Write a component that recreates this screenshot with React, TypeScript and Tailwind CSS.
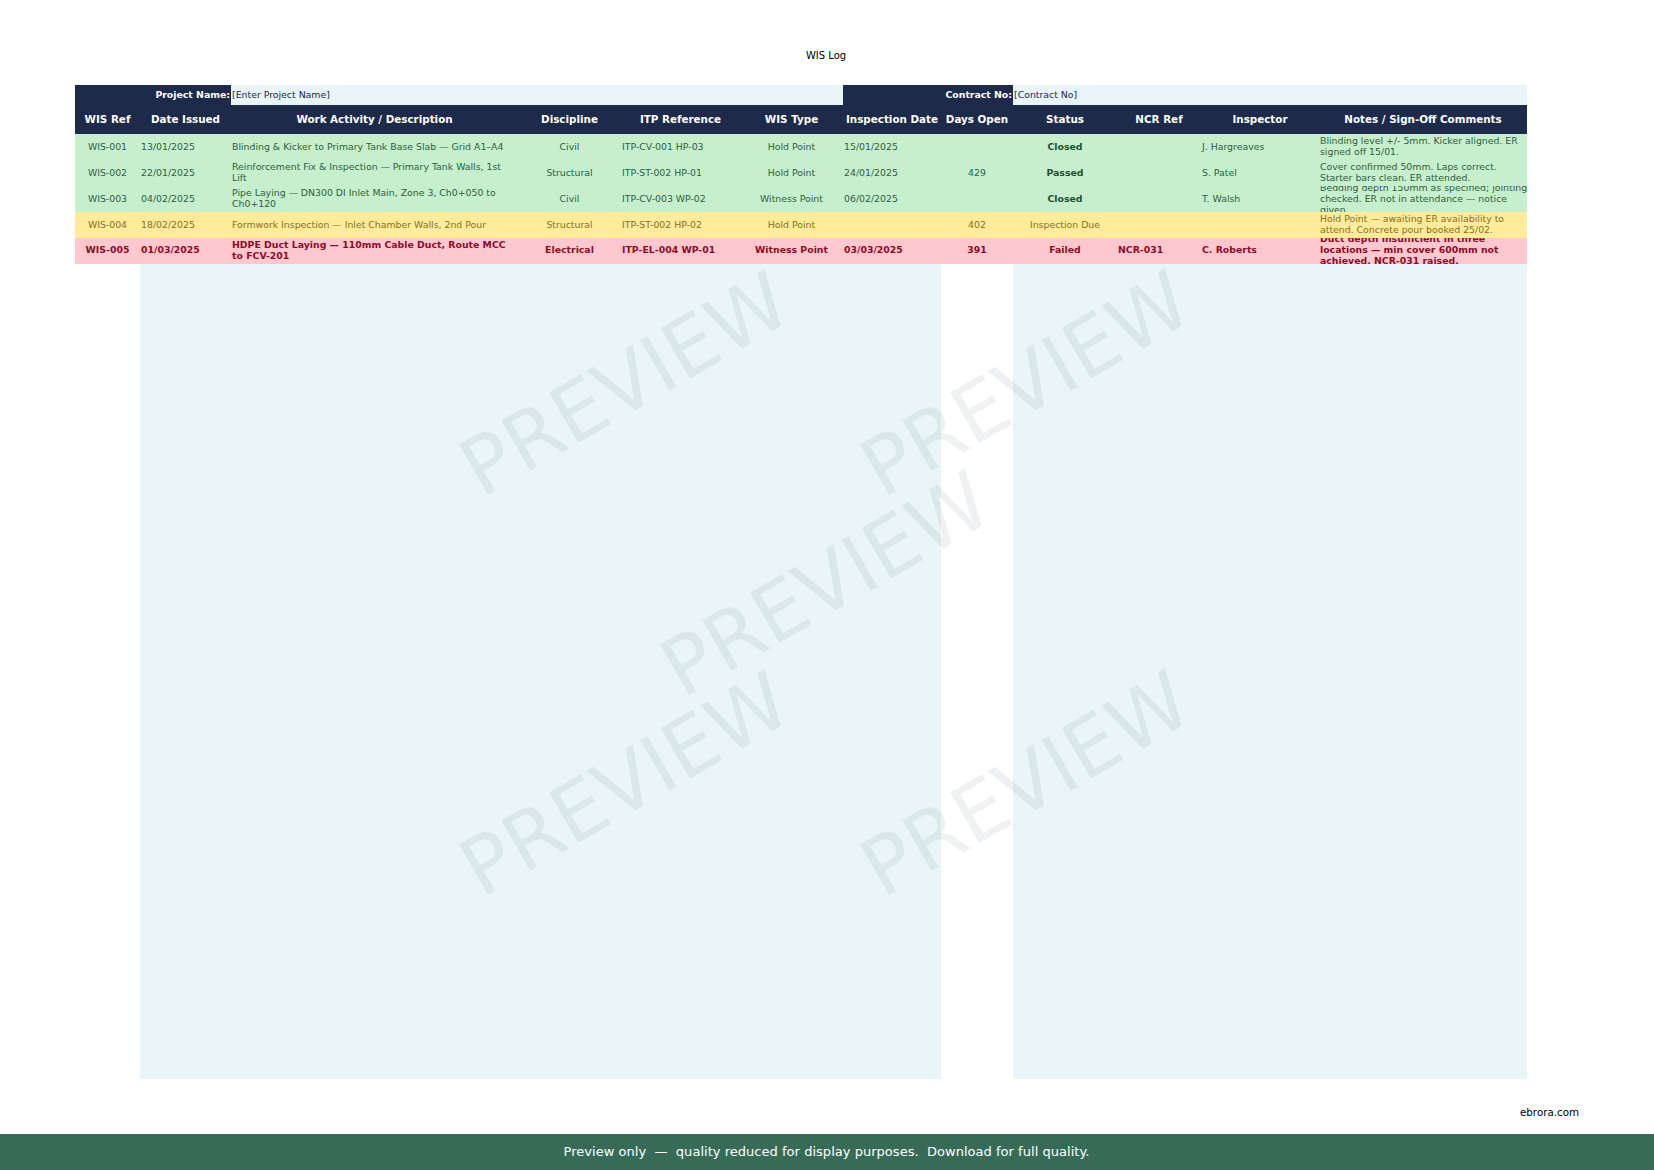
const cols = "grid grid-cols-[65px_91px_287px_103px_119px_103px_98px_72px_104px_84px_118px_208px]";

const headers = [
  "WIS Ref",
  "Date Issued",
  "Work Activity / Description",
  "Discipline",
  "ITP Reference",
  "WIS Type",
  "Inspection Date",
  "Days Open",
  "Status",
  "NCR Ref",
  "Inspector",
  "Notes / Sign-Off Comments",
];

type Tone = "green" | "yellow" | "red";

interface Row {
  tone: Tone;
  boldStatus?: boolean;
  cells: string[];
}

const rows: Row[] = [
  {
    tone: "green",
    boldStatus: true,
    cells: [
      "WIS-001",
      "13/01/2025",
      "Blinding & Kicker to Primary Tank Base Slab — Grid A1–A4",
      "Civil",
      "ITP-CV-001 HP-03",
      "Hold Point",
      "15/01/2025",
      "",
      "Closed",
      "",
      "J. Hargreaves",
      "Blinding level +/- 5mm. Kicker aligned. ER signed off 15/01.",
    ],
  },
  {
    tone: "green",
    boldStatus: true,
    cells: [
      "WIS-002",
      "22/01/2025",
      "Reinforcement Fix & Inspection — Primary Tank Walls, 1st Lift",
      "Structural",
      "ITP-ST-002 HP-01",
      "Hold Point",
      "24/01/2025",
      "429",
      "Passed",
      "",
      "S. Patel",
      "Cover confirmed 50mm. Laps correct. Starter bars clean. ER attended.",
    ],
  },
  {
    tone: "green",
    boldStatus: true,
    cells: [
      "WIS-003",
      "04/02/2025",
      "Pipe Laying — DN300 DI Inlet Main, Zone 3, Ch0+050 to Ch0+120",
      "Civil",
      "ITP-CV-003 WP-02",
      "Witness Point",
      "06/02/2025",
      "",
      "Closed",
      "",
      "T. Walsh",
      "Bedding depth 150mm as specified; jointing checked. ER not in attendance — notice given.",
    ],
  },
  {
    tone: "yellow",
    cells: [
      "WIS-004",
      "18/02/2025",
      "Formwork Inspection — Inlet Chamber Walls, 2nd Pour",
      "Structural",
      "ITP-ST-002 HP-02",
      "Hold Point",
      "",
      "402",
      "Inspection Due",
      "",
      "",
      "Hold Point — awaiting ER availability to attend. Concrete pour booked 25/02.",
    ],
  },
  {
    tone: "red",
    cells: [
      "WIS-005",
      "01/03/2025",
      "HDPE Duct Laying — 110mm Cable Duct, Route MCC to FCV-201",
      "Electrical",
      "ITP-EL-004 WP-01",
      "Witness Point",
      "03/03/2025",
      "391",
      "Failed",
      "NCR-031",
      "C. Roberts",
      "Duct depth insufficient in three locations — min cover 600mm not achieved. NCR-031 raised.",
    ],
  },
];

const toneClass: Record<Tone, string> = {
  green: "bg-[#c6efce] text-[#2f6040]",
  yellow: "bg-[#ffeb9c] text-[#8a7020]",
  red: "bg-[#ffc7ce] text-[#8c0c28] font-bold",
};

// columns with left aligned text
const leftAligned = [1, 2, 4, 6, 9, 10, 11];

function Cell({ text, index, bold, tone }: { text: string; index: number; bold?: boolean; tone: Tone }) {
  const left = leftAligned.includes(index);
  return (
    <div
      className={`flex h-[26px] items-center overflow-hidden leading-[11px] ${tone === "red" ? "pb-[3px]" : "pb-[2px]"} ${
        left ? "justify-start pl-px text-left" : "justify-center text-center"
      } ${bold ? "font-bold text-[#1f5030]" : ""}`}
    >
      <span className={index === 11 ? "block w-[209px] shrink-0" : "block"}>{text}</span>
    </div>
  );
}

function Watermark({ className }: { className: string }) {
  return (
    <div
      className={`pointer-events-none absolute -translate-x-1/2 -translate-y-1/2 -rotate-30 text-[80px] leading-none text-[#5f7480]/[0.1] ${className}`}
    >
      PREVIEW
    </div>
  );
}

export default function App() {
  return (
    <div className="relative flex h-[1170px] w-[1654px] flex-col overflow-hidden bg-white font-['DejaVu_Sans',sans-serif] text-black">
      <div className="flex h-[85px] shrink-0 justify-center pt-[50px] pr-[2px] text-[10px] leading-3">WIS Log</div>

      <div className="ml-[75px] w-[1452px] shrink-0">
        <div className="flex h-5 text-[9.35px] leading-5">
          <div className="w-[156px] bg-[#1e2a4a] pr-px text-right font-bold text-white">Project Name:</div>
          <div className="w-[612px] bg-[#e9f5f6] pl-px text-[#1e2a4a]">[Enter Project Name]</div>
          <div className="w-[170px] bg-[#1e2a4a] pr-px text-right font-bold text-white">Contract No:</div>
          <div className="w-[514px] bg-[#e9f5f6] pl-px text-[#1e2a4a]">[Contract No]</div>
        </div>

        <div className={`${cols} h-[29px] bg-[#1e2a4a] pt-px text-[10.35px] font-bold text-white`}>
          {headers.map((h) => (
            <div key={h} className="flex items-center justify-center whitespace-nowrap">
              {h}
            </div>
          ))}
        </div>

        {rows.map((row) => (
          <div key={row.cells[0]} className={`${cols} h-[26px] text-[9.35px] ${toneClass[row.tone]}`}>
            {row.cells.map((c, i) => (
              <Cell key={i} text={c} index={i} tone={row.tone} bold={row.boldStatus && i === 8} />
            ))}
          </div>
        ))}

        <div className="ml-[65px] flex h-[815px] gap-[72px]">
          <div className="w-[801px] bg-[#e9f5f6]" />
          <div className="w-[514px] bg-[#e9f5f6]" />
        </div>
      </div>

      <div className="flex h-[55px] shrink-0 justify-end pt-[27px] pr-[75px] text-[10.3px] leading-3">ebrora.com</div>

      <div className="flex h-9 shrink-0 items-center justify-center bg-[#376b58] pr-[1px] text-[13px] tracking-[0.03px] whitespace-pre text-white">
        Preview only  —  quality reduced for display purposes.  Download for full quality.
      </div>

      <Watermark className="top-[385px] left-[625px]" />
      <Watermark className="top-[385px] left-[1026px]" />
      <Watermark className="top-[585px] left-[826px]" />
      <Watermark className="top-[785px] left-[625px]" />
      <Watermark className="top-[785px] left-[1026px]" />
    </div>
  );
}
